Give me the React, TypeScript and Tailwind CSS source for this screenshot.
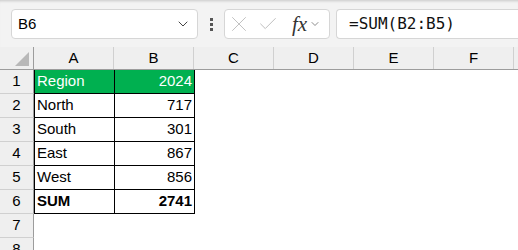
import { ChevronDown, X, Check } from "lucide-react";

const cols = ["A", "B", "C", "D", "E", "F"];

const data: { label: string; value: string; head?: boolean; bold?: boolean }[] = [
  { label: "Region", value: "2024", head: true },
  { label: "North", value: "717" },
  { label: "South", value: "301" },
  { label: "East", value: "867" },
  { label: "West", value: "856" },
  { label: "SUM", value: "2741", bold: true },
];

export default function App() {
  return (
    <div
      className="h-[250px] w-[518px] overflow-hidden bg-white text-black"
      style={{ fontFamily: '"Liberation Sans", Arial, sans-serif' }}
    >
      {/* formula bar */}
      <div className="flex h-[47px] items-center bg-[#f3f3f3] pl-[11px] pt-[1px] shadow-[inset_0_3px_3px_-2px_rgba(0,0,0,0.18)]">
        <div className="flex h-[30px] w-[187px] items-center justify-between rounded-[4px] border border-[#d6d6d6] bg-white pl-[6px] pr-[6px]">
          <span className="text-[15px]">B6</span>
          <ChevronDown className="h-4 w-4 text-[#444]" strokeWidth={1.5} />
        </div>
        <div className="flex w-[26px] flex-col items-center gap-[2px]">
          <span className="h-[3px] w-[3px] bg-[#555]" />
          <span className="h-[3px] w-[3px] bg-[#555]" />
          <span className="h-[3px] w-[3px] bg-[#555]" />
        </div>
        <div className="flex h-[30px] w-[106px] items-center rounded-[4px] border border-[#d6d6d6] bg-white pl-[1px]">
          <X className="h-[26px] w-[26px] text-[#b8b8b8]" strokeWidth={0.8} />
          <Check className="ml-[5px] h-[22px] w-[22px] text-[#b8b8b8]" strokeWidth={1} />
          <span
            className="ml-[13px] text-[21px] italic leading-none text-[#333]"
            style={{ fontFamily: '"Liberation Serif", "Times New Roman", serif' }}
          >
            fx
          </span>
          <ChevronDown className="ml-[2px] h-3 w-3 text-[#666]" strokeWidth={1.5} />
        </div>
        <div className="ml-[6px] flex h-[30px] flex-1 items-center rounded-l-[4px] border border-r-0 border-[#d6d6d6] bg-white pl-[12px]">
          <span
            className="text-[16px] text-[#111]"
            style={{ fontFamily: '"DejaVu Sans Mono", "Liberation Mono", monospace' }}
          >
            =SUM(B2:B5)
          </span>
        </div>
      </div>

      {/* grid */}
      <div className="flex text-[15px]">
        <div className="flex w-[34px] flex-col">
          <div className="relative h-[23px] border-b border-r border-[#9c9c9c] bg-[#efefef]">
            <div className="absolute bottom-[3px] right-[4px] h-0 w-0 border-b-[14px] border-l-[14px] border-b-[#b8b8b8] border-l-transparent" />
          </div>
          {[1, 2, 3, 4, 5, 6, 7, 8].map((n) => (
            <div
              key={n}
              className="flex h-[24px] shrink-0 items-center justify-center border-b border-r border-[#d0d0d0] border-r-[#9c9c9c] bg-[#efefef]"
            >
              {n}
            </div>
          ))}
        </div>
        <div className="flex flex-1 flex-col">
          <div className="flex h-[23px] border-b border-[#9c9c9c] bg-[#efefef]">
            {cols.map((c) => (
              <div key={c} className="flex w-[80px] shrink-0 items-center justify-center border-r border-[#d0d0d0]">
                {c}
              </div>
            ))}
          </div>
          <div className="grid w-[160px] grid-cols-[79px_81px] border-l border-black">
            {data.map((r) => (
              <div key={r.label} className="contents">
                <div
                  className={`flex h-[24px] items-center border-b border-black pl-[2px] ${
                    r.head ? "bg-[#00b050] text-white" : ""
                  } ${r.bold ? "font-bold" : ""}`}
                >
                  {r.label}
                </div>
                <div
                  className={`flex h-[24px] items-center justify-end border-b border-l border-r border-black pr-[2px] ${
                    r.head ? "bg-[#00b050] text-white" : ""
                  } ${r.bold ? "font-bold" : ""}`}
                >
                  {r.value}
                </div>
              </div>
            ))}
          </div>
        </div>
      </div>
    </div>
  );
}
